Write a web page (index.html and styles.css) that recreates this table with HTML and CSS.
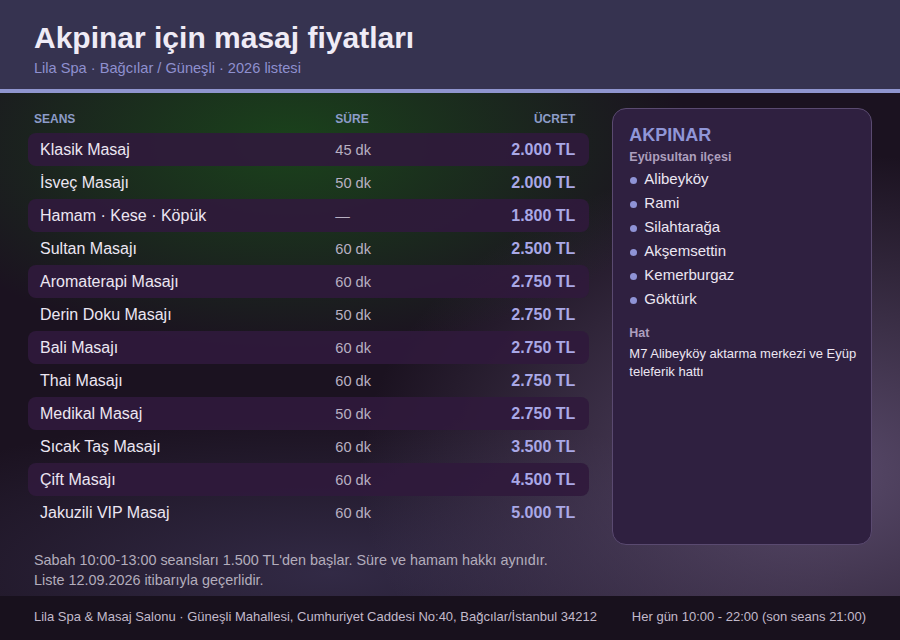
FILE: index.html
```html
<!DOCTYPE html>
<html lang="tr">
<head>
<meta charset="utf-8">
<title>Akpinar için masaj fiyatları</title>
<link rel="stylesheet" href="styles.css">
</head>
<body>
<div class="page">
  <header class="top">
    <h1 class="title">Akpinar için masaj fiyatları</h1>
    <div class="subtitle">Lila Spa · Bağcılar / Güneşli · 2026 listesi</div>
  </header>
  <main class="main">
    <section class="prices">
      <div class="thead">
        <span class="c-name">SEANS</span>
        <span class="c-dur">SÜRE</span>
        <span class="c-price">ÜCRET</span>
      </div>
      <div class="row alt"><span class="c-name">Klasik Masaj</span><span class="c-dur">45 dk</span><span class="c-price">2.000 TL</span></div>
      <div class="row"><span class="c-name">İsveç Masajı</span><span class="c-dur">50 dk</span><span class="c-price">2.000 TL</span></div>
      <div class="row alt"><span class="c-name">Hamam · Kese · Köpük</span><span class="c-dur">—</span><span class="c-price">1.800 TL</span></div>
      <div class="row"><span class="c-name">Sultan Masajı</span><span class="c-dur">60 dk</span><span class="c-price">2.500 TL</span></div>
      <div class="row alt"><span class="c-name">Aromaterapi Masajı</span><span class="c-dur">60 dk</span><span class="c-price">2.750 TL</span></div>
      <div class="row"><span class="c-name">Derin Doku Masajı</span><span class="c-dur">50 dk</span><span class="c-price">2.750 TL</span></div>
      <div class="row alt"><span class="c-name">Bali Masajı</span><span class="c-dur">60 dk</span><span class="c-price">2.750 TL</span></div>
      <div class="row"><span class="c-name">Thai Masajı</span><span class="c-dur">60 dk</span><span class="c-price">2.750 TL</span></div>
      <div class="row alt"><span class="c-name">Medikal Masaj</span><span class="c-dur">50 dk</span><span class="c-price">2.750 TL</span></div>
      <div class="row"><span class="c-name">Sıcak Taş Masajı</span><span class="c-dur">60 dk</span><span class="c-price">3.500 TL</span></div>
      <div class="row alt"><span class="c-name">Çift Masajı</span><span class="c-dur">60 dk</span><span class="c-price">4.500 TL</span></div>
      <div class="row"><span class="c-name">Jakuzili VIP Masaj</span><span class="c-dur">60 dk</span><span class="c-price">5.000 TL</span></div>
      <div class="notes">
        <p>Sabah 10:00-13:00 seansları 1.500 TL'den başlar. Süre ve hamam hakkı aynıdır.</p>
        <p>Liste 12.09.2026 itibarıyla geçerlidir.</p>
      </div>
    </section>
    <aside class="card">
      <h2 class="card-title">AKPINAR</h2>
      <div class="card-sub">Eyüpsultan ilçesi</div>
      <ul class="places">
        <li>Alibeyköy</li>
        <li>Rami</li>
        <li>Silahtarağa</li>
        <li>Akşemsettin</li>
        <li>Kemerburgaz</li>
        <li>Göktürk</li>
      </ul>
      <div class="card-label">Hat</div>
      <div class="card-text">M7 Alibeyköy aktarma merkezi ve Eyüp teleferik hattı</div>
    </aside>
  </main>
  <footer class="foot">
    <span>Lila Spa &amp; Masaj Salonu · Güneşli Mahallesi, Cumhuriyet Caddesi No:40, Bağcılar/İstanbul 34212</span>
    <span>Her gün 10:00 - 22:00 (son seans 21:00)</span>
  </footer>
</div>
</body>
</html>
```
FILE: styles.css
```css
* { box-sizing: border-box; margin: 0; padding: 0; }
html, body { width: 900px; height: 640px; overflow: hidden; }
body {
  font-family: "Liberation Sans", Arial, sans-serif;
  background: #1a1220;
  color: #e8e2ee;
}
.page {
  width: 900px;
  height: 640px;
  display: flex;
  flex-direction: column;
}
.top {
  height: 93px;
  background: #363350;
  border-bottom: 4px solid #8f95cf;
  padding: 20px 34px 0;
}
.title {
  font-size: 30px;
  font-weight: 700;
  color: #efebf6;
  line-height: 36px;
}
.subtitle {
  font-size: 14.6px;
  color: #8f90cf;
  line-height: 18px;
  margin-top: 3px;
}
.main {
  flex: 1;
  display: flex;
  gap: 23px;
  padding: 15px 28px 0 28px;
  background:
    radial-gradient(ellipse 400px 210px at 290px 50px, rgba(26, 78, 26, 0.8), rgba(26, 78, 26, 0) 100%),
    radial-gradient(ellipse 460px 320px at 820px 380px, rgba(100, 84, 120, 0.85), rgba(90, 75, 110, 0) 100%),
    radial-gradient(ellipse 520px 160px at 330px 480px, rgba(58, 50, 82, 0.75), rgba(58, 50, 82, 0) 100%),
    #1b1220;
}
.prices {
  width: 562px;
  display: flex;
  flex-direction: column;
}
.thead, .row {
  display: grid;
  grid-template-columns: 1fr 120px 120px;
  align-items: center;
  padding: 0 14px 0 12px;
}
.thead {
  height: 25px;
  padding-left: 6px;
  padding-bottom: 4px;
}
.row {
  height: 33px;
  border-radius: 8px;
}
.row.alt { background: rgba(48, 26, 60, 0.9); }
.c-name { font-size: 16px; color: #ece6f2; }
.c-dur { font-size: 14.6px; color: #b8b0c2; }
.c-price { text-align: right; font-size: 16px; font-weight: 700; color: #a9a8e6; }
.thead .c-name, .thead .c-dur, .thead .c-price { font-size: 12px; color: #8d9cc8; font-weight: 700; }
.notes {
  margin-top: 21px;
  padding-left: 6px;
  font-size: 14.4px;
  line-height: 20px;
  color: #b3adbc;
}
.card {
  width: 260px;
  height: 437px;
  border-radius: 14px;
  background: #2f2040;
  border: 1px solid #5a4a70;
  padding: 15px 10px 0 16px;
}
.card-title {
  font-size: 18px;
  font-weight: 700;
  color: #9096d8;
  line-height: 22px;
}
.card-sub {
  font-size: 12.5px;
  font-weight: 700;
  color: #ad9fbd;
  line-height: 16px;
  margin-top: 3px;
}
.places {
  list-style: none;
  margin-top: 2px;
}
.places li {
  font-size: 15px;
  line-height: 24px;
  color: #ece6f2;
  display: flex;
  align-items: center;
  gap: 7px;
}
.places li::before {
  content: "";
  width: 7px;
  height: 7px;
  border-radius: 50%;
  background: #8f93d6;
  margin-top: 2px;
  margin-left: 1px;
}
.card-label {
  margin-top: 14px;
  font-size: 12.5px;
  font-weight: 700;
  color: #ad9fbd;
  line-height: 16px;
}
.card-text {
  margin-top: 4px;
  font-size: 13px;
  line-height: 18px;
  color: #ece6f2;
}
.foot {
  height: 44px;
  background: #18111d;
  display: flex;
  justify-content: space-between;
  align-items: center;
  padding: 0 34px 4px 34px;
  font-size: 13px;
  color: #c2bacb;
}
```
